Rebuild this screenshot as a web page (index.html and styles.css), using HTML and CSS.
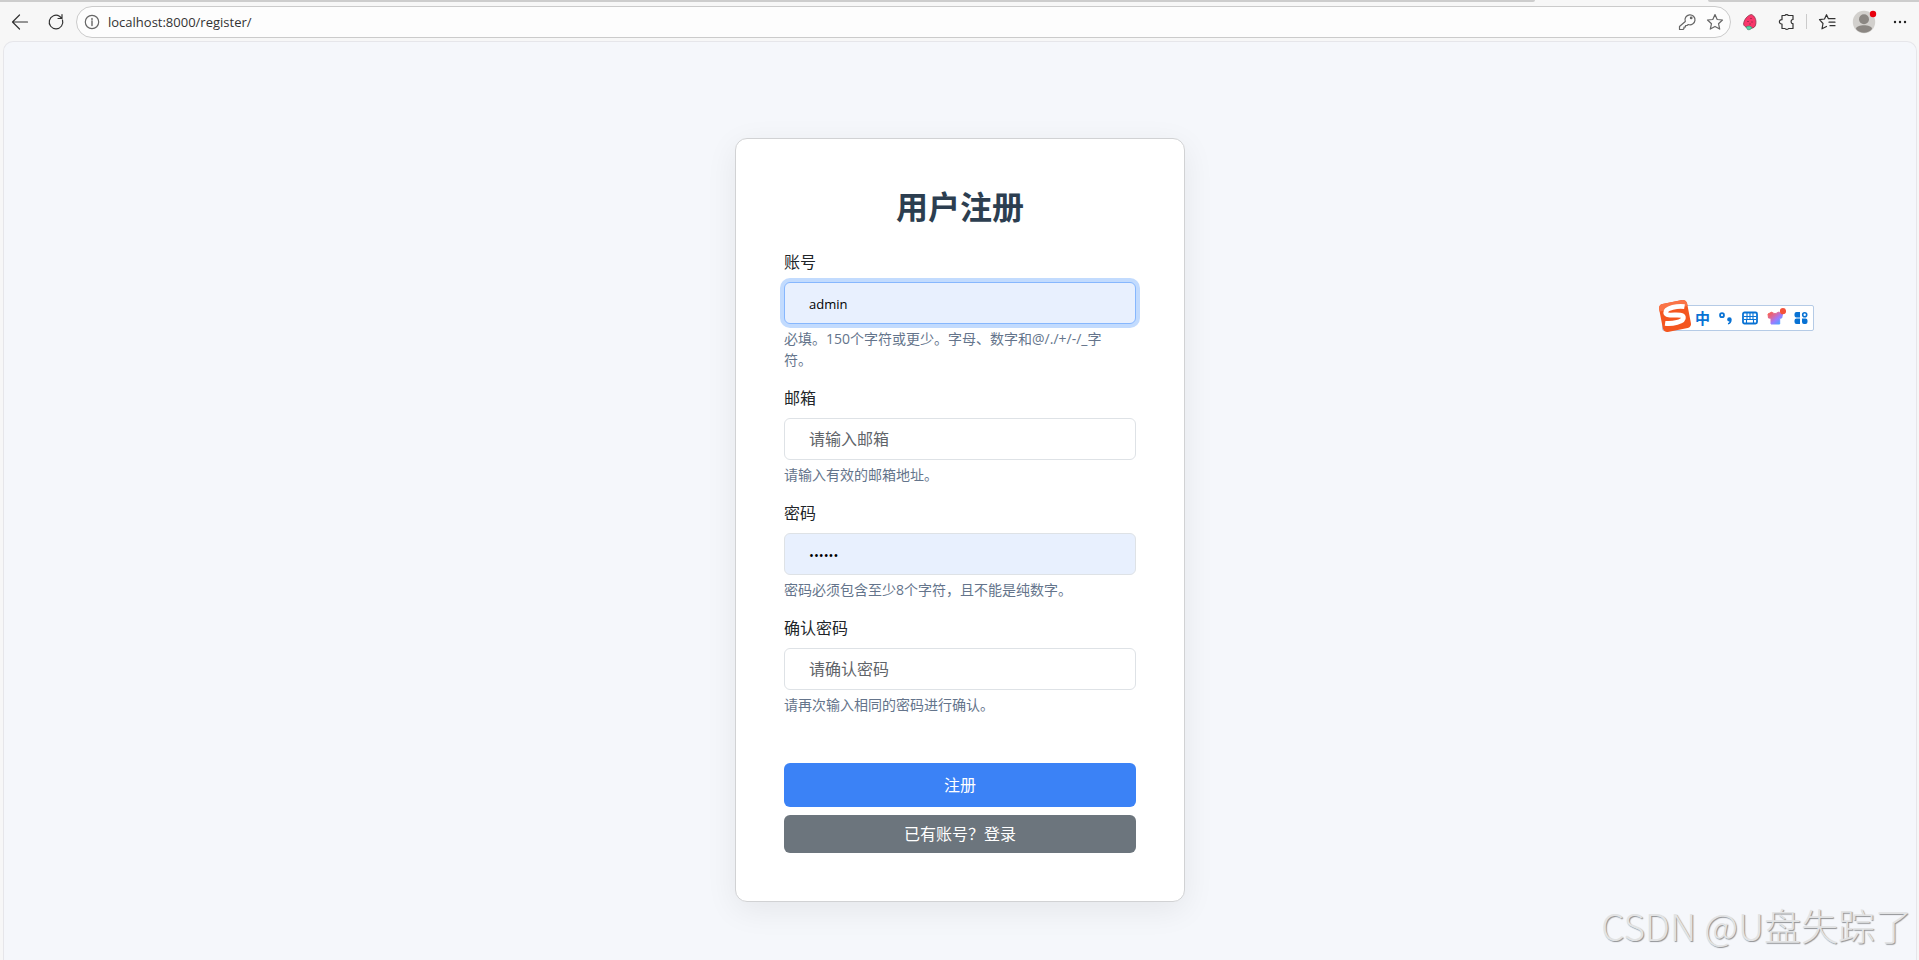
FILE: index.html
```html
<!DOCTYPE html>
<html lang="zh-CN">
<head>
<meta charset="utf-8">
<title>用户注册</title>
<link rel="stylesheet" href="styles.css">
</head>
<body>
<div class="tab-strip"><span class="tab-edge tab-edge-left"></span><span class="tab-edge tab-edge-right"></span></div>
<header class="toolbar">
  <button class="tool" aria-label="返回"><svg width="18" height="18" viewBox="0 0 18 18" class="line"><path d="M16.500 9H2M8.500 2L1.500 9l7 7"/></svg></button>
  <button class="tool" aria-label="刷新"><svg width="18" height="18" viewBox="0 0 18 18" class="line"><path d="M15.500 7A6.800 6.800 0 1 1 12.500 3.200L15 5.500M15 1.500v4h-4"/></svg></button>
  <div class="address">
    <svg width="16" height="16" viewBox="0 0 16 16" class="line soft"><circle cx="8" cy="8" r="6.700"/><path d="M8 7v4.500M8 4.400v1.200" stroke-width="1.400"/></svg>
    <input class="url" type="text" aria-label="地址" value="localhost:8000/register/">
    <button class="mini" aria-label="密码"><svg width="18" height="18" viewBox="0 0 18 18" class="line soft"><path d="M7.300 8.500a5 5 0 1 1 3 3L9 12.500H7.500V14H6v1.500l-1 1H1.500v-3z"/><circle cx="13.200" cy="4.900" r=".8"/></svg></button>
    <button class="mini" aria-label="收藏此页"><svg width="18" height="18" viewBox="0 0 18 18" class="line soft"><path d="M9 1.500l2.200 5 5.300.5-4 3.700 1.200 5.400L9 13.400l-4.700 2.700 1.200-5.400-4-3.700 5.300-.5z"/></svg></button>
  </div>
  <div class="tools">
    <button class="tool small" aria-label="草莓扩展"><svg width="16" height="18" viewBox="0 0 16 18"><path d="M9.500 1.500C13 3 14.500 7 13.800 11c-.4 3-2.300 4.300-5 4.200C5 15 1.800 13.500 1.600 11 1.800 7 5.500 2 9.500 1.500z" fill="#f9376b" stroke="#873346" stroke-width=".8"/><path d="M4 14c2-1.500 5-1 6 .7-1 1.800-3 2.500-4.500 1.800z" fill="#55d6a4" stroke="#39826b" stroke-width=".6"/><path d="M9 5v1M6 8v1M10 8.500v1M7.500 11h1" stroke="#6b2038"/></svg></button>
    <button class="tool small" aria-label="扩展"><svg width="18" height="18" viewBox="0 0 18 18" class="line"><path d="M4 2.500h3c.2-1.300 3-1.300 3.200 0H15v4c-2.500-.3-2.500 4.500 0 4.200v4.800h-4.500c-.2 1.300-3.200 1.300-3.400 0H4V11c-3.500.3-3.500-4.600 0-4.300z"/></svg></button>
    <span class="divider"></span>
    <button class="tool small" aria-label="收藏夹"><svg width="18" height="18" viewBox="0 0 18 18" class="line"><path d="M10.500 5.700h6.500M11 9.200h6M12 12.700h5M10.300 5.500L8.500 1.700 6.500 6 1.500 6.700 5 10.500l-1 5.300 4.500-2.300"/></svg></button>
    <button class="tool profile" aria-label="个人资料"><svg width="26" height="26" viewBox="0 0 26 26"><circle cx="12" cy="13" r="11.200" fill="#d2d0cd"/><circle cx="12" cy="10.300" r="5" fill="#8b8783"/><path d="M4 20c0-5 16-5 16 0-4 5-12 5-16 0z" fill="#8b8783"/><circle cx="21" cy="5" r="3.200" fill="#e8000d"/></svg></button>
    <button class="tool small" aria-label="更多"><svg width="16" height="16" viewBox="0 0 16 16" fill="#222"><circle cx="3" cy="8" r="1.200"/><circle cx="8" cy="8" r="1.200"/><circle cx="13" cy="8" r="1.200"/></svg></button>
  </div>
</header>
<main class="page">
  <form class="card">
    <h1 class="title">用户注册</h1>
    <div class="field">
      <label for="username">账号</label>
      <input class="control filled active" id="username" type="text" value="admin">
      <p class="help">必填。150个字符或更少。字母、数字和@/./+/-/_字<br>符。</p>
    </div>
    <div class="field">
      <label for="email">邮箱</label>
      <input class="control" id="email" type="email" placeholder="请输入邮箱">
      <p class="help">请输入有效的邮箱地址。</p>
    </div>
    <div class="field">
      <label for="password1">密码</label>
      <input class="control filled" id="password1" type="password" value="123456">
      <p class="help">密码必须包含至少8个字符，且不能是纯数字。</p>
    </div>
    <div class="field">
      <label for="password2">确认密码</label>
      <input class="control" id="password2" type="password" placeholder="请确认密码">
      <p class="help">请再次输入相同的密码进行确认。</p>
    </div>
    <div class="actions">
      <button class="btn primary" type="submit">注册</button>
      <a class="btn secondary" href="/login/">已有账号？登录</a>
    </div>
  </form>
</main>
<aside class="ime" aria-label="输入法">
  <svg class="ime-logo" width="36" height="36" viewBox="0 0 34 34"><g transform="rotate(-11 17 17)"><rect x="3.500" y="3.500" width="27" height="27" rx="4" fill="#f4561f"/><path d="M3.500 10V7.500a4 4 0 0 1 4-4h19a4 4 0 0 1 4 4V10z" fill="#fa7447"/><path d="M27.500 10C22 8 9.500 7.500 9 12.300c-.4 4.700 15.500 2.700 15.500 7.400 0 4.600-12 4.300-18 2.300" fill="none" stroke="#fff" stroke-width="4.600"/></g></svg>
  <button class="ime-key ime-text">中</button>
  <button class="ime-key" aria-label="标点"><svg width="16" height="16" viewBox="0 0 14 14"><circle cx="3.500" cy="4.500" r="1.700" fill="none" stroke="#0872d4" stroke-width="1.600"/><path d="M8 8.300a2 2 0 1 1 4 0c0 2.600-1.300 4-3.300 4.400v-1.200c.9-.3 1.300-.8 1.300-1.400A1.900 1.900 0 0 1 8 8.300z" fill="#0872d4"/></svg></button>
  <button class="ime-key" aria-label="软键盘"><svg width="16" height="14" viewBox="0 0 16 14"><rect x="1" y="1.500" width="14" height="11" rx="1.500" fill="#fff" stroke="#0872d4" stroke-width="1.800"/><path d="M2 5.500h12M2 8.500h12M5 2v6.500M8 2v6.500M11 2v6.500M4.500 8.500V12M11.500 8.500V12" stroke="#0872d4" stroke-width="1.100"/></svg></button>
  <button class="ime-key" aria-label="皮肤"><svg width="20" height="20" viewBox="0 0 20 20"><defs><linearGradient id="shirt" x1="0" y1="0" x2="1" y2="1"><stop offset="0" stop-color="#ff5a3c"/><stop offset=".35" stop-color="#d9689f"/><stop offset=".6" stop-color="#9b7bff"/><stop offset="1" stop-color="#34b3ff"/></linearGradient></defs><path d="M2 6l4-2c1.500 2 4.500 2 6 0l4.500 2-.8 4-2 .3V16H5v-5.700L2.500 10z" fill="url(#shirt)" stroke="url(#shirt)"/><circle cx="17" cy="3.200" r="3.100" fill="#f4523a"/></svg></button>
  <button class="ime-key" aria-label="工具箱"><svg width="14" height="14" viewBox="0 0 14 14" fill="#0872d4"><path d="M2.500 1H6v5.500H2.500A2 2 0 0 1 .5 4.500V3a2 2 0 0 1 2-2zM2.500 7.500H6V13H2.500a2 2 0 0 1-2-2V9.500a2 2 0 0 1 2-2zM8 7.500h3.500a2 2 0 0 1 2 2V11a2 2 0 0 1-2 2H10a2 2 0 0 1-2-2z"/><circle cx="10.700" cy="3.700" r="2" fill="none" stroke="#0872d4" stroke-width="1.600"/></svg></button>
</aside>
<div class="watermark">CSDN @U盘失踪了</div>
</body>
</html>
```
FILE: styles.css
```css
* { box-sizing: border-box; }

body {
  margin: 0;
  min-height: 100vh;
  display: flex;
  flex-direction: column;
  background: #f7f7f7;
  color: #212529;
  font-family: "Open Sans", "Noto Sans CJK SC", sans-serif;
  font-size: 16px;
  line-height: 24px;
}

button { padding: 0; border: 0; background: none; font: inherit; color: inherit; }
svg { display: block; }

.tab-strip { display: flex; justify-content: space-between; height: 2px; }
.tab-edge { background: #cdcdcd; }
.tab-edge-left { width: 80%; border-bottom-right-radius: 2px; }
.tab-edge-right { width: 11%; border-bottom-left-radius: 2px; }

.toolbar {
  display: flex;
  align-items: center;
  height: 39px;
  padding: 0 11px;
}
.line { fill: none; stroke: #333; stroke-width: 1.2; stroke-linejoin: round; stroke-linecap: round; }
.line.soft { stroke: #666; }
.tool + .tool { margin-left: 18px; }
.address {
  flex: 1;
  display: flex;
  align-items: center;
  gap: 10px;
  height: 32px;
  margin-left: 11px;
  padding: 0 6px 0 7px;
  border: 1px solid #cbcbcb;
  border-radius: 16px;
  background: #fdfdfd;
}
.url {
  flex: 1;
  margin-left: -2px;
  padding: 0;
  border: 0;
  outline: 0;
  background: none;
  color: #333;
  font-family: "Open Sans", sans-serif;
  font-size: 13px;
}
.tools { display: flex; align-items: center; margin-left: 11px; }
.tools .tool + .tool { margin-left: 20px; }
.tools .tool + .profile { margin-left: 16px; }
.divider { width: 1px; height: 15px; margin: 0 11px 0 10px; background: #cbcbcb; }
.tools .tool.small:last-child { margin-left: 14px; }

.page {
  flex: 1;
  display: flex;
  justify-content: center;
  align-items: flex-start;
  margin: 0 2px 0 3px;
  padding: 96px 16px 56px;
  border: 1px solid #e6e6ea;
  border-bottom: 0;
  border-radius: 10px 10px 0 0;
  background: #f5f7fb;
}
.card {
  width: 100%;
  max-width: 450px;
  padding: 48px;
  border: 1px solid #d1d2d4;
  border-radius: 12px;
  background: #fff;
  box-shadow: 0 8px 32px rgba(0, 0, 0, 0.07);
}
.title {
  margin: 0 0 24px;
  color: #2c3e50;
  font-size: 32px;
  font-weight: 700;
  line-height: 39px;
  text-align: center;
}
.field { display: flex; flex-direction: column; margin-bottom: 16px; }
.field label { margin-bottom: 8px; }
.control {
  width: 100%;
  height: 42px;
  padding: 0 24px;
  border: 1px solid #dee2e6;
  border-radius: 6px;
  outline: 0;
  background: #fff;
  color: #212529;
  font: inherit;
}
.control::placeholder { color: #5f6469; opacity: 1; }
.control.filled { padding-top: 2px; background: #e8f0fe; color: #000; font-size: 13px; }
.control.active { border-color: #86b7fe; box-shadow: 0 0 0 4px #c2dbfe; }
.help { margin: 4px 0 0; color: #64748b; font-size: 14px; line-height: 21px; }
.actions { display: flex; flex-direction: column; gap: 8px; padding-top: 32px; }
.btn {
  padding: 7px 12px;
  border-radius: 6px;
  color: #fff;
  text-align: center;
  text-decoration: none;
}
.primary { padding: 10px 12px; background: #3b82f6; color: #fff; }
.secondary { background: #6c757d; }

.ime {
  position: absolute;
  top: 305px;
  right: 105px;
  display: flex;
  align-items: center;
  gap: 8px;
  height: 26px;
  padding: 0 5px 0 32px;
  border: 1px solid #b5cbe6;
  border-radius: 2px;
  background: #fff;
  color: #0872d4;
}
.ime-logo { position: absolute; left: -6px; top: -8px; }
.ime-text { font-size: 15px; font-weight: 700; }

.watermark {
  position: absolute;
  right: 7px;
  bottom: 11px;
  color: #e2e3e4;
  font-family: "Noto Sans CJK SC", sans-serif;
  font-size: 37px;
  font-weight: 300;
  line-height: 48px;
  text-shadow: 1px 1px 1px #8f9194;
}
```
